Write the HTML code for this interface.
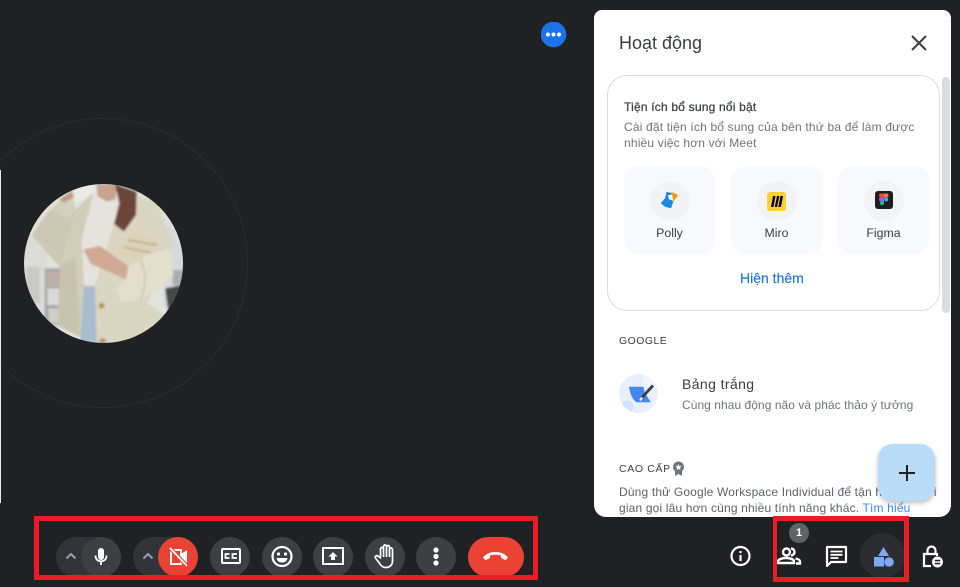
<!DOCTYPE html>
<html lang="vi">
<head>
<meta charset="utf-8">
<title>Hoạt động</title>
<style>
html,body{margin:0;padding:0;width:960px;height:587px;overflow:hidden;background:#202124;font-family:"Liberation Sans",sans-serif}
#w{position:absolute;left:0;top:0;width:960px;height:587px;overflow:hidden;background:#202124;filter:blur(.35px)}
.a{position:absolute}
.t{position:absolute;white-space:nowrap}
.tile{position:absolute;width:91px;height:88px;background:#f8f9fc;border-radius:14px}
.tile i{position:absolute;left:25.5px;top:15px;width:40px;height:40px;border-radius:50%;background:#f1f3f4}
.tile span{position:absolute;left:0;right:0;top:59px;text-align:center;font-size:12.3px;line-height:16px;color:#3c4043}
.b{position:absolute;top:537px;width:40px;height:40px;border-radius:50%;background:#3c4043}
.b svg,.ic{position:absolute;left:0;top:0}
</style>
</head>
<body>
<div id="w">
<!-- ring -->
<div class="a" style="left:-42px;top:118px;width:288px;height:288px;border-radius:50%;border:1px solid #292b2e"></div>

<!-- left edge line -->
<div class="a" style="left:0;top:170px;width:1px;height:333px;background:#e8e8e8"></div>

<!-- avatar -->
<svg class="a" style="left:24px;top:184px" width="159" height="159" viewBox="72 72 477 477">
<defs>
<clipPath id="c"><circle cx="310.500" cy="310.500" r="238.500"/></clipPath>
<filter id="bl" x="-5%" y="-5%" width="110%" height="110%"><feGaussianBlur stdDeviation="3.500"/></filter>
</defs>
<g clip-path="url(#c)">
<g filter="url(#bl)">
<rect x="60" y="60" width="500" height="500" fill="#e2e2dd"/>
<rect x="72" y="230" width="70" height="240" fill="#dcdcd6"/>
<rect x="80" y="320" width="40" height="110" fill="#c9cac6"/>
<rect x="134" y="325" width="48" height="170" fill="#a3a8a8"/>
<rect x="140" y="335" width="38" height="45" fill="#bcb0ac"/>
<rect x="142" y="385" width="36" height="50" fill="#d9dad8"/>
<rect x="145" y="445" width="35" height="45" fill="#cfcfc8"/>
<path d="M505 180L549 280V440H490Z" fill="#d5d9dd"/>
<path d="M495 385L545 375V440L505 455Z" fill="#46494a"/>
<path d="M518 330H549V375H518Z" fill="#a9aeb0"/>
<path d="M220 75H285V110L225 125Z" fill="#ebebe6"/>
<path d="M95 225L140 160L175 130L225 150L228 230L180 322Z" fill="#cdc8b4"/>
<path d="M175 125L215 93L225 150L205 180L160 150Z" fill="#d4d0bf"/>
<path d="M178 118L215 93L222 112L190 128Z" fill="#c2997f"/>
<path d="M180 320L225 150L275 100L290 110L250 250L255 380L240 530L175 500L185 400Z" fill="#d1cdb9"/>
<path d="M180 320L225 290L240 530L175 495Z" fill="#c8c3ad"/>
<path d="M282 95L350 115L345 190L320 260L285 375H252L245 240Z" fill="#e6e3df"/>
<path d="M252 378H287L290 548H240Z" fill="#a8bccd"/>
<path d="M285 375L342 190L400 100L470 125L515 235L510 300L440 430L500 470L400 540L290 549Z" fill="#dad6c2"/>
<path d="M290 72H352L346 118L320 125L292 108Z" fill="#c6a48e"/>
<path d="M345 72L410 95L408 165L372 215L342 192L358 130Z" fill="#6b4537"/>
<path d="M392 215L488 240L442 303L342 285Z" fill="#ddd3ba"/>
<path d="M372 262L450 278M385 240L470 255" stroke="#8f8973" stroke-width="5" opacity=".55"/>
<path d="M250 268L300 258L345 290L386 320L378 358L320 332L272 312Z" fill="#cfa994"/>
<path d="M385 320L440 285L512 265L520 345L470 390L420 422L362 425L350 385L378 358Z" fill="#e4dfcd"/>
<path d="M420 300Q450 350 420 422" stroke="#c7c1aa" stroke-width="4" fill="none"/>
<circle cx="305" cy="437" r="9" fill="#b69560"/>
<circle cx="308" cy="543" r="9" fill="#b69560"/>
</g>
</g>
</svg>

<!-- more bubble -->
<svg class="a" style="left:541px;top:22px" width="26" height="26" viewBox="0 0 26 26">
<circle cx="12.500" cy="12.500" r="12.800" fill="#1a73e8"/>
<circle cx="7" cy="12.500" r="2" fill="#fff"/><circle cx="12.500" cy="12.500" r="2" fill="#fff"/><circle cx="18" cy="12.500" r="2" fill="#fff"/>
</svg>

<!-- panel -->
<div class="a" style="left:594px;top:10px;width:357px;height:507px;background:#fff;border-radius:8px 8px 12px 12px;overflow:hidden">
  <div class="t" style="left:25px;top:22px;font-size:18px;line-height:22px;color:#3c4043">Hoạt động</div>
  <svg class="a" style="left:314px;top:22px" width="22" height="22" viewBox="0 0 22 22"><path d="M4 4L18 18M18 4L4 18" stroke="#3c4043" stroke-width="2" fill="none"/></svg>
  <div class="a" style="left:13px;top:65px;width:331px;height:234px;border:1px solid #dadce0;border-radius:20px"></div>
  <div class="a" style="left:348px;top:67px;width:8px;height:236px;background:#dadce0;border-radius:4px"></div>

  <div class="t" style="left:30px;top:90px;font-size:12px;line-height:15px;letter-spacing:.2px;color:#3c4043;-webkit-text-stroke:.25px #3c4043">Tiện ích bổ sung nổi bật</div>
  <div class="t" style="left:30px;top:109px;font-size:12px;line-height:16px;letter-spacing:.18px;color:#70757a">Cài đặt tiện ích bổ sung của bên thứ ba để làm được<br>nhiều việc hơn với Meet</div>

  <div class="tile" style="left:30px;top:156px"><i></i><span>Polly</span>
    <svg class="a" style="left:33px;top:22px" width="26" height="26" viewBox="0 0 26 26">
      <path d="M9.700 3.700L14.700 5.300L13 10.300L16.300 13.700L14 20.300L8 18.700L3.700 15.300L8 10.300Z" fill="#1a88e8"/>
      <path d="M11 7L14.500 7L15 12L12 11.500Z" fill="#fff"/>
      <path d="M14 3.700L21.300 7L16.300 13.700L15.500 8Z" fill="#f79a0e"/>
    </svg></div>
  <div class="tile" style="left:137px;top:156px"><i></i><span>Miro</span>
    <svg class="a" style="left:36px;top:26px" width="19" height="19" viewBox="0 0 19 19">
      <rect width="19" height="19" rx="3" fill="#ffd02f"/>
      <path d="M4 15L6 4H8.500L6.500 15ZM7.800 15L10 4H12.500L10 15ZM11.300 15L13.500 4H16L14 15Z" fill="#050038"/>
    </svg></div>
  <div class="tile" style="left:244px;top:156px"><i></i><span>Figma</span>
    <svg class="a" style="left:37px;top:25px" width="18" height="18" viewBox="0 0 18 18">
      <rect width="18" height="18" rx="3" fill="#1e1e1e"/>
      <path d="M6 2.500H9V6.500H6A2 2 0 0 1 6 2.500Z" fill="#f24e1e"/>
      <path d="M9 2.500H11.500A2 2 0 0 1 11.500 6.500H9Z" fill="#ff7262"/>
      <path d="M6 6.500H9V10.500H6A2 2 0 0 1 6 6.500Z" fill="#a259ff"/>
      <circle cx="11.200" cy="8.500" r="2" fill="#1abcfe"/>
      <path d="M6 10.500H9V12.500A2 2 0 1 1 6 10.500Z" fill="#0acf83"/>
    </svg></div>

  <div class="t" style="left:146px;top:259px;font-size:14px;line-height:18px;color:#1a73e8;-webkit-text-stroke:.15px #1a73e8">Hiện thêm</div>

  <div class="t" style="left:25px;top:325px;font-size:10.500px;line-height:13px;letter-spacing:.45px;color:#3c4043">GOOGLE</div>

  <svg class="a" style="left:25px;top:364px" width="39" height="39" viewBox="0 0 39 39">
    <circle cx="19.500" cy="19.500" r="19.500" fill="#e8f0fe"/>
    <clipPath id="bc"><circle cx="19.500" cy="19.500" r="19.500"/></clipPath>
    <g clip-path="url(#bc)"><circle cx="8" cy="33" r="6.500" fill="#d2e3fc"/><circle cx="30" cy="5" r="7" fill="#f1f5fe"/></g>
    <path d="M10 12.700H24.300L26 19L31.700 28.300H17.700Q12 25 10 12.700Z" fill="#4285f4"/>
    <path d="M23 23.500L34 11.500" stroke="#3c4043" stroke-width="2.800"/>
    <path d="M23 23.500L21 26.500" stroke="#fff" stroke-width="2"/>
  </svg>
  <div class="t" style="left:88px;top:365px;font-size:14px;line-height:18px;letter-spacing:.4px;color:#3c4043">Bảng trắng</div>
  <div class="t" style="left:88px;top:387px;font-size:12px;line-height:16px;letter-spacing:.05px;color:#70757a">Cùng nhau động não và phác thảo ý tưởng</div>

  <div class="t" style="left:25px;top:452px;font-size:10.500px;line-height:14px;letter-spacing:.65px;color:#3c4043">CAO CẤP</div>
  <svg class="a" style="left:78px;top:451px" width="13" height="15" viewBox="0 0 13 15">
    <path d="M3 9L3 15L6.500 13L10 15V9Z" fill="#70757a"/>
    <circle cx="6.500" cy="6" r="5.500" fill="#70757a"/>
    <path d="M6.500 3L7.400 5.100L9.600 5.300L8 6.800L8.400 9L6.500 7.900L4.600 9L5 6.800L3.400 5.300L5.600 5.100Z" fill="#fff"/>
  </svg>
  <div class="t" style="left:25px;top:474px;font-size:12px;line-height:16px;letter-spacing:.16px;color:#5f6368">Dùng thử Google Workspace Individual để tận hưởng thời<br>gian gọi lâu hơn cùng nhiều tính năng khác. <span style="color:#4285f4">Tìm hiểu</span></div>
</div>

<!-- FAB -->
<div class="a" style="left:878px;top:444px;width:57px;height:57px;border-radius:15px;background:#b9dcf8;box-shadow:0 2px 5px rgba(60,64,67,.35)"></div>
<svg class="a" style="left:896px;top:462px" width="22" height="22" viewBox="0 0 22 22"><path d="M11 3V19M3 11H19" stroke="#202124" stroke-width="2" fill="none"/></svg>

<!-- toolbar -->
<div class="a" style="left:56px;top:537px;width:65px;height:40px;border-radius:20px;background:#303337"></div>
<div class="a" style="left:133px;top:537px;width:65px;height:40px;border-radius:20px;background:#303337"></div>
<svg class="a" style="left:62px;top:549px" width="18" height="14" viewBox="0 0 18 14"><path d="M4.500 9.500L9 5L13.500 9.500" stroke="#9aa0a6" stroke-width="2" fill="none"/></svg>
<svg class="a" style="left:139px;top:549px" width="18" height="14" viewBox="0 0 18 14"><path d="M4.500 9.500L9 5L13.500 9.500" stroke="#9aa0a6" stroke-width="2" fill="none"/></svg>

<div class="b" style="left:81px">
  <svg width="40" height="40" viewBox="0 0 40 40"><rect x="17" y="11" width="6" height="12" rx="3" fill="#fff"/><path d="M14.500 18.500C14.500 22.500 17 24.300 20 24.300S25.500 22.500 25.500 18.500M20 24V28" stroke="#fff" stroke-width="1.800" fill="none"/></svg>
</div>
<div class="b" style="left:158px;background:#ea4335">
  <svg width="40" height="40" viewBox="0 0 40 40"><path d="M13 13H23V27H13Z" stroke="#fff" stroke-width="2" fill="none"/><path d="M23 17L29 13V26L23 23Z" fill="#fff"/><path d="M12 11L29 29" stroke="#ea4335" stroke-width="4"/><path d="M12 11L29 29" stroke="#fff" stroke-width="1.800"/></svg>
</div>
<div class="b" style="left:210px">
  <svg width="40" height="40" viewBox="0 0 40 40"><rect x="12" y="12" width="18" height="14" rx="1" stroke="#fff" stroke-width="2" fill="none"/><path d="M19.500 17H15.500V21H19.500M27 17H22.500V21H27" stroke="#fff" stroke-width="1.800" fill="none"/></svg>
</div>
<div class="b" style="left:262px">
  <svg width="40" height="40" viewBox="0 0 40 40"><circle cx="20" cy="19.500" r="9.500" stroke="#fff" stroke-width="2.200" fill="none"/><circle cx="16.500" cy="17" r="1.600" fill="#fff"/><circle cx="23.500" cy="17" r="1.600" fill="#fff"/><path d="M14.500 21H25.500C25 24.500 22.500 25.500 20 25.500S15 24.500 14.500 21Z" fill="#fff"/></svg>
</div>
<div class="b" style="left:313px">
  <svg width="40" height="40" viewBox="0 0 40 40"><rect x="10" y="11" width="20" height="16" stroke="#fff" stroke-width="2" fill="none"/><path d="M20 15L24.500 19.500H22V23H18V19.500H15.500Z" fill="#fff"/></svg>
</div>
<div class="b" style="left:365px">
  <svg width="40" height="40" viewBox="0 0 40 40"><path d="M15.500 21V12a1.500 1.500 0 0 1 3 0V9.500a1.500 1.500 0 0 1 3 0V10a1.500 1.500 0 0 1 3 0V12.500a1.500 1.500 0 0 1 3 0V24c0 4-3 6.500-6.500 6.500c-3 0-4.800-1.500-6-3.500l-4.500-6c-1-1.500 1-3 2.500-2zM18.500 12V20M21.500 9.500V20M24.500 10V20" stroke="#fff" stroke-width="1.700" fill="none" stroke-linejoin="round"/></svg>
</div>
<div class="b" style="left:416px">
  <svg width="40" height="40" viewBox="0 0 40 40"><circle cx="20" cy="13" r="2.600" fill="#fff"/><circle cx="20" cy="19.500" r="2.600" fill="#fff"/><circle cx="20" cy="26" r="2.600" fill="#fff"/></svg>
</div>
<div class="a" style="left:468px;top:537px;width:56px;height:40px;border-radius:20px;background:#ea4335">
  <svg class="ic" width="56" height="40" viewBox="0 0 56 40"><path d="M15 20.500C18 16.500 23 15 27.500 15S37 16.500 40 20.500L37.500 23.300L33 21V18.500C30 17.500 25 17.500 22 18.500V21L17.500 23.300Z" fill="#fff"/></svg>
</div>

<!-- right controls -->
<svg class="a" style="left:729px;top:544px" width="24" height="24" viewBox="0 0 24 24"><circle cx="11.500" cy="12" r="9" stroke="#fff" stroke-width="2.200" fill="none"/><rect x="10.400" y="11" width="2.200" height="6" fill="#fff"/><rect x="10.400" y="7" width="2.200" height="2.200" fill="#fff"/></svg>

<div class="a" style="left:789px;top:523px;width:20px;height:20px;border-radius:50%;background:#5f6368;color:#fff;font-size:11px;font-weight:bold;line-height:20px;text-align:center">1</div>
<svg class="a" style="left:776px;top:544px" width="26" height="24" viewBox="0 0 26 24"><circle cx="10.500" cy="8" r="3.500" stroke="#fff" stroke-width="2.400" fill="none"/><path d="M2 19V17.500C2 15 7 14 10 14S18 15 18 17.500V19Z" stroke="#fff" stroke-width="2.400" fill="none"/><path d="M15 4.500A3.500 3.500 0 0 1 15 11.500M19.500 14.500C22 15 24 16 24 17.500V19.500H20" stroke="#fff" stroke-width="2.400" fill="none"/></svg>

<svg class="a" style="left:824px;top:544px" width="24" height="24" viewBox="0 0 24 24"><path d="M3 3H22V18H7L3 22Z" stroke="#fff" stroke-width="2.200" fill="none" stroke-linejoin="round"/><path d="M6.500 7.500H18.500M6.500 10.800H18.500M6.500 14H14.500" stroke="#fff" stroke-width="1.800" fill="none"/></svg>

<div class="a" style="left:860px;top:533px;width:45px;height:45px;border-radius:50%;background:#2a2c2f"></div>
<svg class="a" style="left:872px;top:545px" width="24" height="24" viewBox="0 0 24 24"><path d="M11.500 2L17 11H6Z" fill="#7baaf7"/><rect x="2" y="12" width="10" height="9.500" fill="#7baaf7"/><circle cx="17" cy="17" r="4.800" fill="#7baaf7"/></svg>

<svg class="a" style="left:920px;top:544px" width="24" height="24" viewBox="0 0 24 24"><path d="M7.500 10V6.500A4 4 0 0 1 15.500 6.500V10" stroke="#fff" stroke-width="2.200" fill="none"/><path d="M11 22H4V10H17V12" stroke="#fff" stroke-width="2.200" fill="none"/><circle cx="17.500" cy="18" r="5.500" fill="#fff"/><rect x="14.800" y="15.800" width="5.400" height="1.500" fill="#202124"/><rect x="14.800" y="18.800" width="5.400" height="1.500" fill="#202124"/></svg>

<!-- red annotation boxes -->
<div class="a" style="left:34px;top:516px;width:494px;height:54px;border:5px solid #ed1c24"></div>
<div class="a" style="left:773px;top:516px;width:127px;height:56px;border:5px solid #ed1c24;border-left-width:4px"></div>
</div>
</body>
</html>
